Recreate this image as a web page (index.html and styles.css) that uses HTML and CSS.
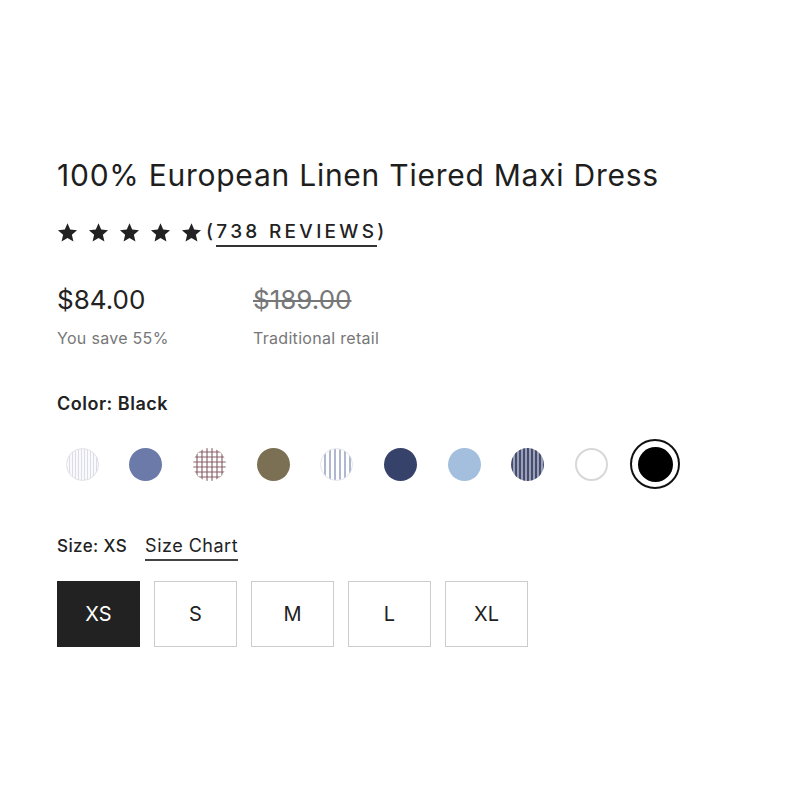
FILE: index.html
```html
<!DOCTYPE html>
<html lang="en">
<head>
<meta charset="utf-8">
<title>100% European Linen Tiered Maxi Dress</title>
<link rel="stylesheet" href="styles.css">
</head>
<body>
<main class="product">
  <h1 class="title">100% European Linen Tiered Maxi Dress</h1>
  <div class="rating">
    <div class="stars">
      <svg class="star" viewBox="0 0 24 24"><path d="M12 1.5l3.1 7.2 7.8.7-5.9 5.2 1.8 7.7L12 18.3l-6.8 4 1.8-7.7L1.1 9.4l7.8-.7z"/></svg>
      <svg class="star" viewBox="0 0 24 24"><path d="M12 1.5l3.1 7.2 7.8.7-5.9 5.2 1.8 7.7L12 18.3l-6.8 4 1.8-7.7L1.1 9.4l7.8-.7z"/></svg>
      <svg class="star" viewBox="0 0 24 24"><path d="M12 1.5l3.1 7.2 7.8.7-5.9 5.2 1.8 7.7L12 18.3l-6.8 4 1.8-7.7L1.1 9.4l7.8-.7z"/></svg>
      <svg class="star" viewBox="0 0 24 24"><path d="M12 1.5l3.1 7.2 7.8.7-5.9 5.2 1.8 7.7L12 18.3l-6.8 4 1.8-7.7L1.1 9.4l7.8-.7z"/></svg>
      <svg class="star" viewBox="0 0 24 24"><path d="M12 1.5l3.1 7.2 7.8.7-5.9 5.2 1.8 7.7L12 18.3l-6.8 4 1.8-7.7L1.1 9.4l7.8-.7z"/></svg>
    </div>
    <span class="reviews">(<a class="reviews-link" href="#">738 REVIEWS</a>)</span>
  </div>

  <div class="prices">
    <div class="price-col">
      <div class="price">$84.00</div>
      <div class="price-note">You save 55%</div>
    </div>
    <div class="price-col">
      <div class="price old">$189.00</div>
      <div class="price-note">Traditional retail</div>
    </div>
  </div>

  <div class="label color-label">Color: Black</div>
  <div class="swatches">
    <button class="swatch"><span class="dot stripe-white"></span></button>
    <button class="swatch"><span class="dot periwinkle"></span></button>
    <button class="swatch"><span class="dot gingham"></span></button>
    <button class="swatch"><span class="dot olive"></span></button>
    <button class="swatch"><span class="dot stripe-blue"></span></button>
    <button class="swatch"><span class="dot navy"></span></button>
    <button class="swatch"><span class="dot sky"></span></button>
    <button class="swatch"><span class="dot stripe-navy"></span></button>
    <button class="swatch"><span class="dot white"></span></button>
    <button class="swatch selected"><span class="dot black"></span></button>
  </div>

  <div class="size-head">
    <span class="label size-label">Size: XS</span>
    <a class="size-chart" href="#">Size Chart</a>
  </div>
  <div class="sizes">
    <button class="size active">XS</button>
    <button class="size">S</button>
    <button class="size">M</button>
    <button class="size">L</button>
    <button class="size">XL</button>
  </div>
</main>
</body>
</html>
```

FILE: styles.css
```css
* { box-sizing: border-box; }

body {
  margin: 0;
  background: #fff;
  font-family: Inter, "Liberation Sans", Arial, sans-serif;
  color: #222;
}

.product {
  padding: 157px 0 0 57px;
}

.title {
  margin: 0;
  font-size: 30px;
  line-height: 36px;
  font-weight: 400;
  color: #1e1e1e;
  letter-spacing: 0.75px;
}

.rating {
  display: flex;
  align-items: center;
  margin-top: 24px;
  height: 30px;
}

.stars {
  display: flex;
  gap: 10px;
}

.star {
  width: 21px;
  height: 21px;
  fill: #222;
  display: block;
}

.reviews {
  margin-left: 4px;
  font-size: 19px;
  font-weight: 500;
  letter-spacing: 3.3px;
  color: #222;
  line-height: 24px;
}

.reviews-link {
  color: #222;
  text-decoration: none;
  border-bottom: 2px solid #333;
  padding-bottom: 2px;
}

.prices {
  display: flex;
  margin-top: 37px;
}

.price-col {
  width: 196px;
}

.price {
  font-size: 26px;
  line-height: 32px;
  color: #222;
}

.price.old {
  color: #777;
  text-decoration: line-through;
  text-decoration-thickness: 2px;
}

.price-note {
  margin-top: 12px;
  font-size: 16px;
  line-height: 20px;
  color: #777;
  letter-spacing: 0.3px;
}

.label {
  font-size: 17px;
  font-weight: 600;
  color: #222;
  line-height: 22px;
  letter-spacing: 0.5px;
}

.color-label {
  margin-top: 45px;
  font-size: 18px;
}

.swatches {
  display: flex;
  gap: 13.7px;
  margin-top: 24px;
}

.swatch {
  width: 50px;
  height: 50px;
  border: 2px solid transparent;
  border-radius: 50%;
  background: #fff;
  padding: 0;
  display: flex;
  align-items: center;
  justify-content: center;
  cursor: pointer;
}

.swatch.selected {
  border-color: #111;
}

.dot {
  width: 33px;
  height: 33px;
  border-radius: 50%;
  display: block;
}

.selected .dot {
  width: 35px;
  height: 35px;
}

.stripe-white {
  border: 1px solid #e2e2e6;
  background: repeating-linear-gradient(90deg, #fafafc 0 2px, #dcdde6 2px 3px);
}

.periwinkle { background: #6b7aa8; }

.gingham {
  background:
    repeating-linear-gradient(90deg, transparent 0 3px, rgba(130, 90, 100, 0.55) 3px 5px),
    repeating-linear-gradient(0deg, #fff 0 3px, rgba(150, 110, 120, 0.55) 3px 5px);
}

.olive { background: #7b7053; }

.stripe-blue {
  border: 1px solid #e4e6ee;
  background: repeating-linear-gradient(90deg, #fff 0 3px, #b0b8d0 3px 5px);
}

.navy { background: #36426a; }

.sky { background: #a3bfdd; }

.stripe-navy {
  background: repeating-linear-gradient(90deg, #464d6c 0 2.5px, #9aa0b8 2.5px 4px);
}

.white {
  border: 2px solid #d8d8d8;
  background: #fff;
}

.black { background: #000; }

.size-head {
  display: flex;
  align-items: baseline;
  gap: 18px;
  margin-top: 46px;
}

.size-label {
  font-weight: 500;
  letter-spacing: 0.4px;
}

.size-chart {
  font-size: 18px;
  color: #222;
  text-decoration: none;
  border-bottom: 2px solid #444;
  padding-bottom: 2px;
  line-height: 22px;
  letter-spacing: 0.5px;
}

.sizes {
  display: flex;
  gap: 14px;
  margin-top: 20px;
}

.size {
  width: 83px;
  height: 66px;
  border: 1px solid #ccc;
  background: #fff;
  color: #222;
  font-family: inherit;
  font-size: 20px;
  padding: 0;
  cursor: pointer;
}

.size.active {
  background: #222;
  border-color: #222;
  color: #fff;
}
```
